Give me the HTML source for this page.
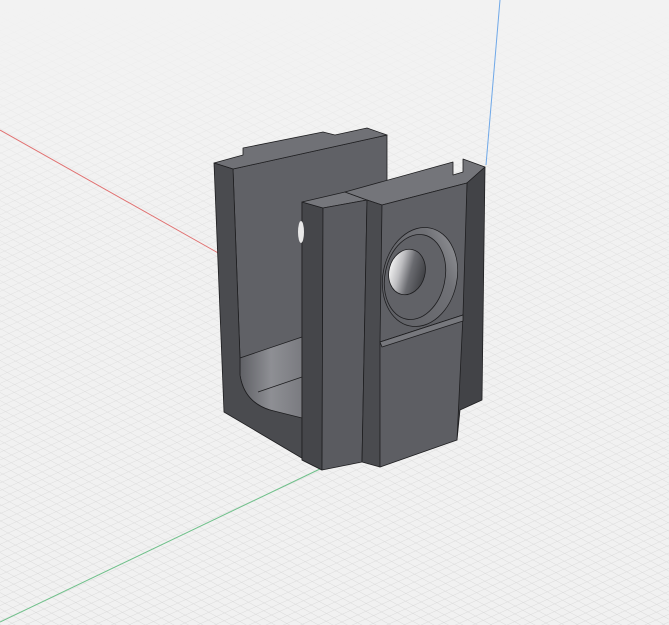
<!DOCTYPE html>
<html><head><meta charset="utf-8"><style>html,body{margin:0;padding:0;background:#efefef;overflow:hidden}svg{display:block}</style></head>
<body>
<svg width="669" height="625" viewBox="0 0 669 625" xmlns="http://www.w3.org/2000/svg">
<defs>
<pattern id="g1" width="7" height="7" patternUnits="userSpaceOnUse" patternTransform="rotate(29)"><line x1="0" y1="0" x2="7" y2="0" stroke="#d6d6d6" stroke-width="0.8"/></pattern>
<pattern id="g2" width="7" height="7" patternUnits="userSpaceOnUse" patternTransform="rotate(-24)"><line x1="0" y1="0" x2="7" y2="0" stroke="#d6d6d6" stroke-width="0.8"/></pattern>
<linearGradient id="fade" x1="0" y1="0" x2="0" y2="1"><stop offset="0" stop-color="#f2f2f2" stop-opacity="1"/><stop offset="0.35" stop-color="#f2f2f2" stop-opacity="0.3"/><stop offset="1" stop-color="#f2f2f2" stop-opacity="0"/></linearGradient>
<linearGradient id="hole" x1="0" y1="0" x2="1" y2="0"><stop offset="0" stop-color="#f2f2f2"/><stop offset="0.3" stop-color="#bdbdc0"/><stop offset="0.6" stop-color="#6a6b70"/><stop offset="1" stop-color="#404145"/></linearGradient>
<linearGradient id="cb" x1="0" y1="1" x2="1" y2="0"><stop offset="0" stop-color="#5c5d62"/><stop offset="0.7" stop-color="#707176"/><stop offset="1" stop-color="#a0a1a5"/></linearGradient>
<linearGradient id="floor" x1="0" y1="0" x2="1" y2="0"><stop offset="0" stop-color="#5f6065"/><stop offset="0.5" stop-color="#8e8f94"/><stop offset="1" stop-color="#7a7b80"/></linearGradient>
</defs>
<rect width="669" height="625" fill="#f1f1f1"/>
<rect width="669" height="625" fill="url(#g1)"/>
<rect width="669" height="625" fill="url(#g2)"/>
<rect width="669" height="625" fill="url(#fade)"/>
<line x1="0" y1="130" x2="220" y2="254" stroke="#e07070" stroke-width="1"/>
<line x1="486" y1="165" x2="500" y2="0" stroke="#6fa8e8" stroke-width="1"/>
<line x1="322" y1="468" x2="0" y2="622" stroke="#6fc08a" stroke-width="1"/>
<g stroke="#1e1e20" stroke-width="0.8" stroke-linejoin="round">
<polygon points="233,169 387,135 387,190 302,202 302,340 240,358" fill="#606166"/>
<polygon points="214,163 243,155 243,148 323,132 335,135 367,128 387,135 233,169" fill="#707176"/>
<path d="M240,358 L302,337 L302,420 L270,410 Q244,402 240,375 Z" fill="url(#floor)"/>
<line x1="258" y1="392" x2="302" y2="377"/>
<path d="M214,163 L233,169 L240,358 L240,375 Q244,402 270,410 L302,418 L302,460 L322,470 L224,412 Z" fill="#4a4b4f"/>
<polygon points="302,202 323,208 322,470 302,460" fill="#45464a"/>
<polygon points="302,202 345,192 367,200 323,208" fill="#76777c"/>
<ellipse cx="301" cy="232" rx="3" ry="11" fill="#e8e8e8" stroke="none"/>
<polygon points="323,208 367,200 362,462 322,470" fill="#5a5b60"/>
<polygon points="345,192 453,162 453,175 463,172 463,159 485,167 467,183 382,205 367,200" fill="#74757a"/>
<polygon points="467,183 485,167 482,400 460,410 457,440" fill="#424347"/>
<polygon points="362,462 367,200 382,205 380,467" fill="#4a4b4f"/>
<polygon points="382,205 467,183 463,315 380,342" fill="#5f6065"/>
<polygon points="380,342 463,315 457,440 380,467" fill="#5d5e63"/>
<polygon points="380,342 463,315 463,321 382,347" fill="#77787d"/>
<ellipse cx="420" cy="277" rx="37" ry="50" transform="rotate(12 420 277)" fill="url(#cb)"/>
<ellipse cx="415" cy="277" rx="30" ry="43" transform="rotate(12 415 277)" fill="#616267"/>
<ellipse cx="407" cy="272" rx="18" ry="23" transform="rotate(15 407 272)" fill="url(#hole)"/>
</g>
</svg>
</body></html>
